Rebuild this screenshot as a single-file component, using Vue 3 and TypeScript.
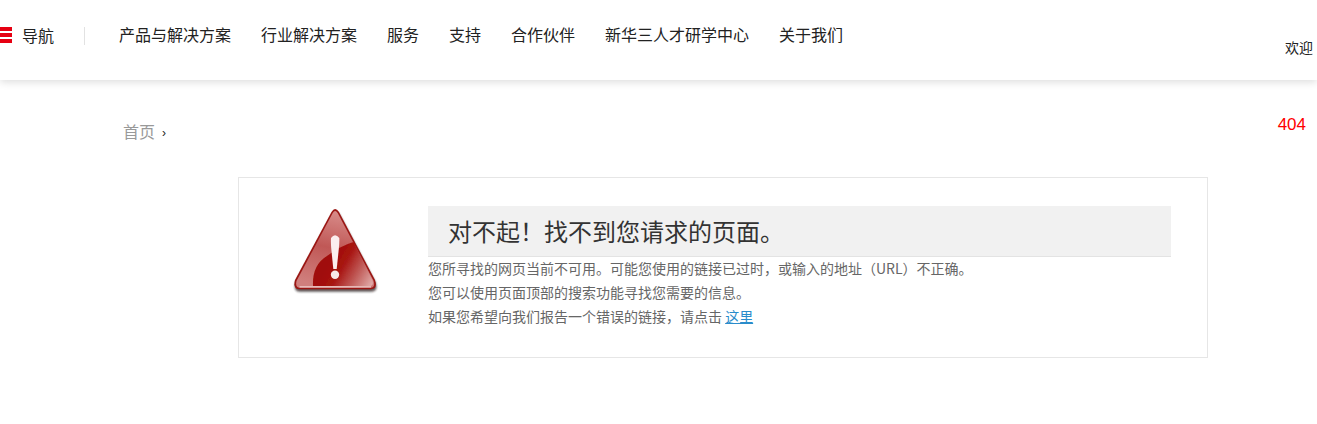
<script setup lang="ts">
const navItems: string[] = ['产品与解决方案', '行业解决方案', '服务', '支持', '合作伙伴', '新华三人才研学中心', '关于我们']
</script>

<template>
  <div class="page">
    <header class="header">
      <div class="nav-toggle">
        <span class="burger"><i></i><i></i><i></i></span>
        <span class="nav-label">导航</span>
      </div>
      <nav class="nav">
        <a v-for="item in navItems" :key="item" class="nav-item">{{ item }}</a>
      </nav>
      <span class="welcome">欢迎</span>
    </header>

    <div class="crumb-row">
      <div class="crumbs"><span class="crumb-home">首页</span><span class="crumb-sep">›</span></div>
      <span class="code">404</span>
    </div>

    <section class="card">
      <div class="icon-col">
        <svg class="warn" width="90" height="90" viewBox="0 0 90 90">
          <defs>
            <linearGradient id="base" gradientUnits="userSpaceOnUse" x1="45" y1="4" x2="30" y2="80">
              <stop offset="0" stop-color="#d98e8c" />
              <stop offset="0.5" stop-color="#c05856" />
              <stop offset="1" stop-color="#d07f7d" />
            </linearGradient>
            <linearGradient id="glow" gradientUnits="userSpaceOnUse" x1="40" y1="55" x2="84" y2="80">
              <stop offset="0" stop-color="#a00c07" />
              <stop offset="0.28" stop-color="#a81512" />
              <stop offset="0.6" stop-color="#c05a57" />
              <stop offset="1" stop-color="#e4b4b2" />
            </linearGradient>
            <filter id="soft" x="-20%" y="-20%" width="140%" height="140%">
              <feGaussianBlur stdDeviation="0.9" />
            </filter>
            <filter id="edge" x="-10%" y="-10%" width="120%" height="120%">
              <feGaussianBlur stdDeviation="0.5" />
            </filter>
          </defs>
          <path d="M41.500 8 L5 76 Q2.500 85 9.500 85.300 L81 85.300 Q88 85 85 76 L49 8 Q45 2 41.500 8 Z" transform="translate(0.500 1.500)" fill="#2a1a1a" opacity="0.75" filter="url(#soft)" />
          <path d="M41.500 7 L5 75 Q2.500 84 9.500 84.300 L81 84.300 Q88 84 85 75 L49 7 Q45 1 41.500 7 Z" fill="#9a1613" />
          <path d="M42.700 8 L6.500 76 Q5 82.800 10 82.800 L80.500 82.800 Q85.500 82.800 83.700 76 L47.700 8 Q45 4 42.700 8 Z" fill="url(#base)" />
          <path d="M23 81 Q22 60 37 51 Q50 41 63.500 37 L82.500 75 Q84 81 80 81 Z" fill="url(#glow)" filter="url(#edge)" />
          <path d="M9.500 81.800 L81 81.800" stroke="#f4dcdb" stroke-width="1.300" opacity="0.85" />
          <path d="M41 33 Q45 27.500 49.300 33 Q49.500 37 48.800 44 L46.700 64 L43.300 64 L41.300 44 Q40.700 37 41 33 Z" fill="#fbeeee" />
          <circle cx="45" cy="69.700" r="4.200" fill="#f8e8e8" />
        </svg>
      </div>
      <div class="message">
        <h1 class="title">对不起！找不到您请求的页面。</h1>
        <div class="lines">
          <p>您所寻找的网页当前不可用。可能您使用的链接已过时，或输入的地址（URL）不正确。</p>
          <p>您可以使用页面顶部的搜索功能寻找您需要的信息。</p>
          <p>如果您希望向我们报告一个错误的链接，请点击 <a class="link">这里</a></p>
        </div>
      </div>
    </section>
  </div>
</template>

<style scoped>
.page {
  width: 1317px;
  height: 424px;
  overflow: hidden;
  background: #fff;
  font-family: "Noto Sans CJK SC", "Liberation Sans", sans-serif;
}
.header {
  height: 80px;
  display: flex;
  align-items: flex-start;
  background: #fff;
  box-shadow: 0 2px 8px rgba(0, 0, 0, 0.14);
  color: #222;
}
.nav-toggle {
  display: flex;
  align-items: center;
  gap: 10px;
  width: 85px;
  height: 18px;
  margin-top: 27px;
  border-right: 1px solid #e2e2e2;
  box-sizing: border-box;
}
.burger {
  display: flex;
  flex-direction: column;
  gap: 2px;
  width: 12px;
  margin-top: -2px;
}
.burger i {
  display: block;
  height: 4px;
  background: #e60012;
}
.nav-label {
  font-size: 16px;
  line-height: 16px;
  margin-top: -2px;
}
.nav {
  display: flex;
  gap: 30px;
  margin-left: 34px;
  margin-top: 22px;
}
.nav-item {
  font-size: 16px;
  line-height: 24px;
}
.welcome {
  margin-left: auto;
  margin-right: 4px;
  margin-top: 37px;
  font-size: 14px;
  line-height: 20px;
}
.crumb-row {
  display: flex;
  justify-content: space-between;
  align-items: flex-start;
  height: 97px;
  padding: 29px 11px 0 123px;
  box-sizing: border-box;
}
.crumbs {
  display: flex;
  align-items: center;
  font-size: 16px;
  line-height: 40px;
  color: #999;
}
.crumb-sep {
  margin-left: 7px;
  margin-top: 4px;
  color: #222;
  font-size: 12px;
  font-family: "Liberation Sans", sans-serif;
}
.code {
  color: #f00;
  font-family: "Liberation Sans", sans-serif;
  font-size: 17px;
  line-height: 26px;
  margin-top: 3px;
}
.card {
  display: flex;
  box-sizing: border-box;
  width: 970px;
  height: 181px;
  margin-left: 238px;
  border: 1px solid #e6e6e6;
  padding: 27px 36px 0 0;
}
.icon-col {
  width: 189px;
  flex: none;
  padding-left: 51px;
  box-sizing: border-box;
}
.warn {
  display: block;
}
.message {
  flex: 1;
  font-size: 14px;
  color: #666;
  padding-top: 1px;
}
.title {
  margin: 0;
  height: 51px;
  box-sizing: border-box;
  background: #f1f1f1;
  border-bottom: 1px solid #e3e3e3;
  padding-left: 20px;
  font-size: 24px;
  font-weight: 400;
  line-height: 50px;
  color: #333;
}
.lines {
  margin-top: -1px;
}
.message p {
  margin: 0;
  line-height: 24px;
}
.link {
  color: #2a8ccb;
  text-decoration: underline;
}
</style>
